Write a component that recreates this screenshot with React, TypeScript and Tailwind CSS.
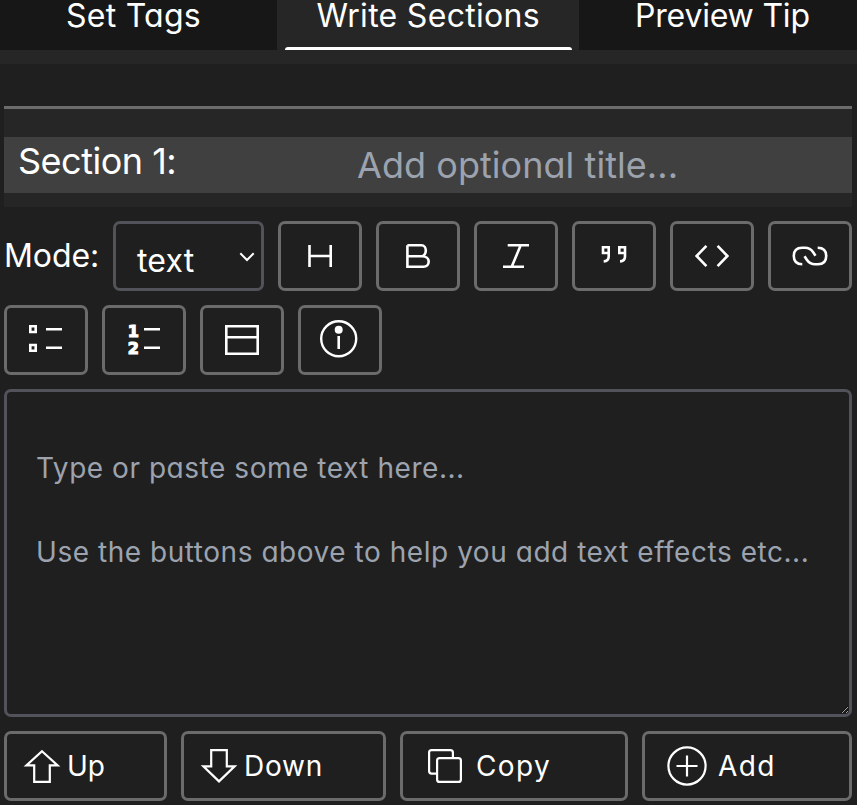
import type { ReactNode } from "react";

const FONT = "font-[Inter,'Open_Sans',sans-serif] [font-feature-settings:'cv11']";

function Glyph({ w = 78, children }: { w?: number; children: ReactNode }) {
  return (
    <svg
      width={w}
      height="64"
      viewBox={`0 0 ${w} 64`}
      fill="none"
      stroke="#fff"
      strokeWidth="2.6"
      className="block shrink-0"
      aria-hidden="true"
    >
      {children}
    </svg>
  );
}

function ToolButton({ label, children }: { label: string; children: ReactNode }) {
  return (
    <button aria-label={label} className="h-[70px] w-[84px] shrink-0 rounded-[7px] border-[3px] border-[#6b6b6b]">
      <Glyph>{children}</Glyph>
    </button>
  );
}

function ActionButton({ className, children }: { className: string; children: ReactNode }) {
  return (
    <button className={`flex h-[70px] shrink-0 items-center rounded-[7px] border-[3px] border-[#6b6b6b] text-[28px] leading-[42px] whitespace-nowrap ${className}`}>
      {children}
    </button>
  );
}

export default function App() {
  return (
    <div className={`h-[805px] w-[857px] overflow-hidden bg-[#1f1f1f] text-white ${FONT}`}>
      <nav className="flex h-[50px] bg-[#171717] text-[32px] leading-[32px]">
        <div className="w-[277px] pl-[66px] whitespace-nowrap"><span className="tracking-[0.25px]">Set Tags</span></div>
        <div className="flex w-[302px] flex-col justify-between bg-[#262626] px-[7.5px]">
          <div className="pl-8 whitespace-nowrap"><span className="tracking-[0.3px]">Write Sections</span></div>
          <div className="h-[3px] rounded-t-[3px] bg-white" />
        </div>
        <div className="w-[278px] pl-[56px] whitespace-nowrap"><span className="tracking-[-0.2px]">Preview Tip</span></div>
      </nav>
      <div className="h-[14px] bg-[#262626]" />

      <main className="pt-[42px] pr-[5px] pl-1">
        <section className="border-t-[3px] border-[#6b6b6b] bg-[#262626] pt-7 pb-[14px]">
          <div className="flex h-14 bg-[#404040] text-[36px]">
            <div className="w-[353px] pl-[14px] leading-[48px] whitespace-nowrap"><span className="tracking-[-0.5px]">Section 1:</span></div>
            <input
              placeholder="Add optional title..."
              className="h-14 min-w-0 flex-1 bg-transparent tracking-[0.05px] outline-none placeholder:text-[#9ca3af]"
            />
          </div>
        </section>

        <div className="mt-[14px] flex flex-wrap gap-[14px]">
          <div className="flex h-[70px] w-[260px]">
            <div className="w-[109px] text-[32px] leading-[70px] whitespace-nowrap"><span className="tracking-[-0.1px]">Mode:</span></div>
            <div className="flex w-[151px] rounded-[7px] border-[3px] border-[#52525b] pl-[21px] text-[32px] leading-[74px]">
              <span className="w-[100px] tracking-[0.2px]">text</span>
              <svg width="20" height="64" viewBox="0 0 20 64" fill="none" stroke="#fff" strokeWidth="2">
                <path d="M3.3 29.3 10 36 16.7 29.3" />
              </svg>
            </div>
          </div>
          <ToolButton label="Heading">
            <path d="M28.5 21V43M49.7 21V43M28.5 32H49.7" />
          </ToolButton>
          <ToolButton label="Bold">
            <path d="M28.4 21.2H42.5C45 21.2 46.8 23.6 46.8 26.6C46.8 29.6 45 32.2 43 32.2H28.4M43 32.2C47 32.2 49.7 34.3 49.7 37.5C49.7 40.7 47.5 42.7 44.5 42.7H28.4V21.2" />
          </ToolButton>
          <ToolButton label="Italic">
            <path d="M30.7 21.3H52M26 42.7H47M43.7 21.3 34.7 42.7" />
          </ToolButton>
          <ToolButton label="Quote">
            <path d="M33.7 29H28V23.3H33.7V32.5Q33.7 37.2 28.7 37.4M50 29H44.3V23.3H50V32.5Q50 37.2 45 37.4" />
          </ToolButton>
          <ToolButton label="Code">
            <path d="M33.4 21.8 23.6 32 33.4 42.2M44.6 21.8 54.4 32 44.6 42.2" />
          </ToolButton>
          <ToolButton label="Link">
            <path d="M31.3 40.2C25.5 40.2 22.8 37 22.8 32C22.8 26.5 26 23.8 31 23.8H34C38 23.8 40 25 42 28L44.5 31.7M46.7 23.8C52.5 23.8 55.2 27 55.2 32C55.2 37.5 52 40.2 47 40.2H44C40 40.2 38 39 36 36L33.5 32.3" />
          </ToolButton>
          <ToolButton label="Bulleted list">
            <path d="M23.3 18.3H28.7V24H23.3ZM23.3 37H28.7V42.7H23.3ZM39 21.3H55M39 39.7H55" />
          </ToolButton>
          <ToolButton label="Numbered list">
            <g fill="#fff" stroke="#fff" strokeWidth="1.2" className="font-['DejaVu_Sans'] text-[16px] font-bold" textAnchor="middle">
              <text x="28.2" y="29.3">1</text>
              <text x="28.2" y="45.5">2</text>
            </g>
            <path d="M39 21.3H55M39 39.7H55" />
          </ToolButton>
          <ToolButton label="Panel">
            <path d="M23.3 18.3H54.7V45.7H23.3ZM23.3 29.3H54.7" />
          </ToolButton>
          <ToolButton label="Info">
            <circle cx="37.7" cy="30.7" r="17.5" strokeWidth="2.4" />
            <circle cx="37.7" cy="21.7" r="4" fill="#fff" stroke="none" />
            <path d="M37.7 28V41" />
          </ToolButton>
        </div>

        <textarea
          placeholder={"Type or paste some text here...\n\nUse the buttons above to help you add text effects etc..."}
          className="mt-[14px] block h-[328px] w-[848px] resize rounded-[7px] border-[3px] border-[#52525b] bg-transparent pt-[55px] pr-4 pl-[29px] text-[28px] leading-[42px] tracking-[0.54px] outline-none placeholder:text-[#9ca3af]"
        />

        <div className="mt-[14px] flex gap-[14px]">
          <ActionButton className="w-[163px]">
            <Glyph w={60}><path strokeWidth="2.2" d="M35 17.2 50.6 31.4H42.8V47.8H27.2V31.4H19.4Z" /></Glyph>
            <span className="tracking-[-0.2px]">Up</span>
          </ActionButton>
          <ActionButton className="w-[205px]">
            <Glyph w={60}><path strokeWidth="2.2" d="M35 47.4 50.6 32.3H42.8V16.2H27.2V32.3H19.4Z" /></Glyph>
            <span className="tracking-[0.8px]">Down</span>
          </ActionButton>
          <ActionButton className="w-[228px]">
            <Glyph w={73}>
              <g strokeWidth="2.2">
                <rect x="34.1" y="24.1" width="23.8" height="23.8" rx="2.5" />
                <path d="M34.1 39.6H28.6Q26.1 39.6 26.1 37.1V18.6Q26.1 16.1 28.6 16.1H47.4Q49.9 16.1 49.9 18.6V24.1" />
              </g>
            </Glyph>
            <span className="tracking-[1.4px]">Copy</span>
          </ActionButton>
          <ActionButton className="w-[210px]">
            <Glyph w={73}>
              <circle cx="42" cy="32" r="18.6" strokeWidth="2.2" />
              <path strokeWidth="2.2" d="M31.5 32H52.5M42 21.5V42.5" />
            </Glyph>
            <span className="tracking-[1.4px]">Add</span>
          </ActionButton>
        </div>
      </main>
    </div>
  );
}
